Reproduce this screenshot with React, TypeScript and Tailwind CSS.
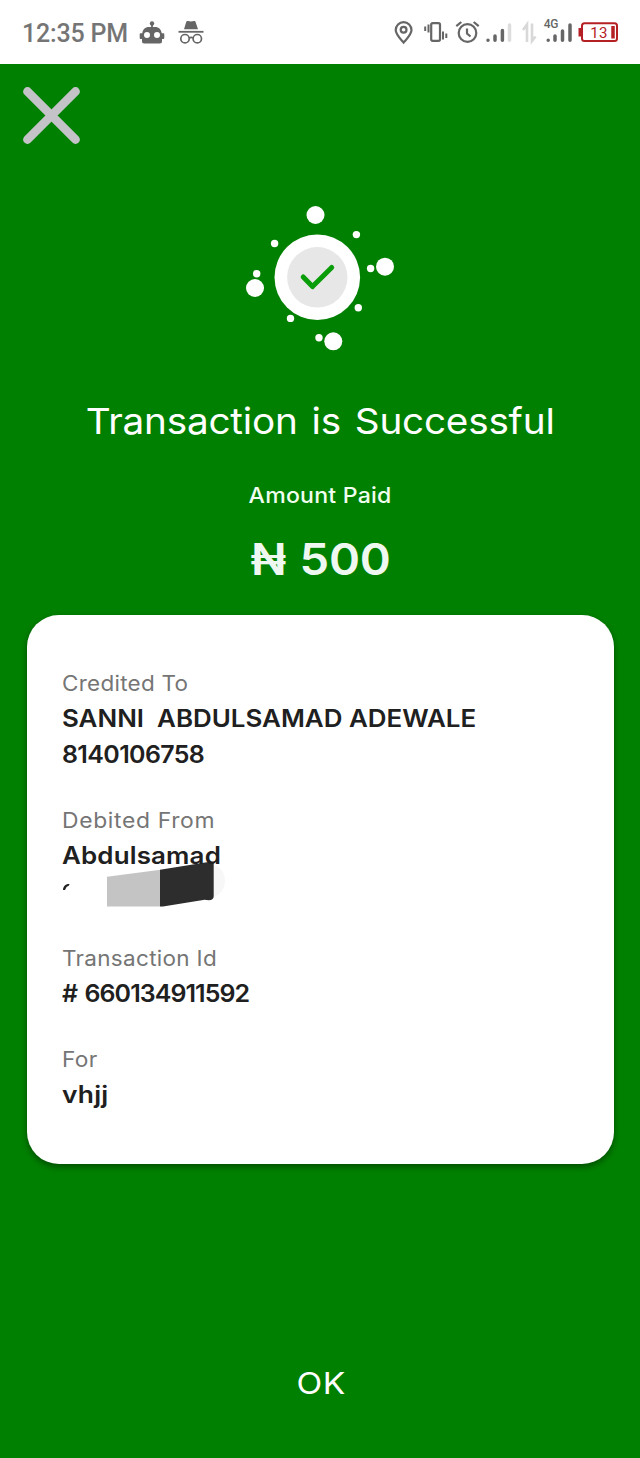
import type { ReactNode } from "react";

function RobotIcon() {
  return (
    <svg className="ml-[12px] h-[24px] w-[26px]" viewBox="139 20 26 24" fill="#666">
      <circle cx="152" cy="23.400" r="2.200" />
      <path d="M151.100 24h1.800v4h-1.800z" />
      <path fillRule="evenodd" d="M149 27h6c4 0 6.300 2.700 6.700 6.200h1.300c1 0 1.300.5 1.300 1.300v3.200c0 .8-.4 1.300-1.300 1.300h-1v2.200c0 1.300-.8 2.300-2.100 2.300h-15.800c-1.300 0-2.100-1-2.100-2.300V39h-1c-.9 0-1.300-.5-1.300-1.300v-3.200c0-.8.3-1.300 1.300-1.300h1.300C142.700 29.700 145 27 149 27zM147 32.100a3 3 0 1 0 0 6a3 3 0 1 0 0-6zM157 32.100a3 3 0 1 0 0 6a3 3 0 1 0 0-6z" />
    </svg>
  );
}

function IncognitoIcon() {
  return (
    <svg className="ml-[13px] h-[24px] w-[26px]" viewBox="178 20 26 24" fill="none" stroke="#666">
      <path d="M184 29.200 186.300 21.800c.3-.9 1-1 1.800-.7 1.800.6 4 .6 5.800 0 .8-.3 1.400 0 1.600.7l2.500 7.400z" fill="#666" stroke="none" />
      <path d="M178.500 31.800h25" strokeWidth="1.800" />
      <circle cx="185" cy="38.700" r="4.200" strokeWidth="1.700" />
      <circle cx="197.300" cy="38.700" r="4.200" strokeWidth="1.700" />
      <path d="M189.200 38c1.200-.8 2.700-.8 3.900 0" strokeWidth="1.700" />
    </svg>
  );
}

function SystemIcons() {
  return (
    <svg className="h-[32px] w-[226px]" viewBox="394 16 226 32" fill="none" stroke="#666">
      <g strokeWidth="2.200">
        <path d="M403.600 42.500c-3-3.500-7.900-8-7.900-12.500a7.900 7.900 0 0 1 15.800 0c0 4.500-4.900 9-7.900 12.500z" />
        <circle cx="403.600" cy="29.700" r="2.900" />
        <rect x="431.200" y="23.200" width="8.800" height="17.600" rx="1.500" />
        <path d="M428.500 24.500v8M425.200 26.500v4.500M443 31.500v8M446.300 33.500v4.500" strokeWidth="2" />
        <circle cx="467.500" cy="33" r="8.800" />
        <path d="M467 28.500v5l3.500 3M456.300 26.200l5-4.200M473.700 22l5 4.200" />
      </g>
      <g strokeWidth="3.500" strokeLinecap="round">
        <path d="M488 40.300v0M495 36v4.300M502.400 30.500v9.800" />
        <path d="M509.500 25v15.300" stroke="#ddd" />
        <path d="M548.200 40.300v0M555 36v4.300M562.500 31v9.300M570 25v15.300" />
      </g>
      <path d="M527 42V24.500L523 30M532 23.500V41l3.500-4.500" stroke="#d8d8d8" strokeWidth="2.600" />
      <text x="543.800" y="28" fontFamily="Roboto" fontSize="12" fontWeight="500" letterSpacing="-.3" fill="#666" stroke="none">4G</text>
      <rect x="582" y="23.200" width="35" height="17.800" rx="2.500" stroke="#b52025" strokeWidth="2" />
      <path d="M580 28v8.500" stroke="#b52025" strokeWidth="3" />
      <path d="M613 26v12.500" stroke="#b52025" strokeWidth="3.500" />
      <text x="590.300" y="37.500" fontFamily="Roboto" fontSize="15" letterSpacing=".2" fill="#b52025" stroke="none">13</text>
    </svg>
  );
}

function SuccessBadge() {
  const dots = [
    [315.500, 215, 9], [385, 266.700, 9], [255, 288, 9], [333.300, 341.300, 9],
    [274.600, 243.500, 3.700], [356.400, 234.600, 3.700], [370.600, 268.500, 3.700], [256.700, 273.700, 3.700],
    [358.300, 307.700, 3.700], [290.500, 318.400, 3.700], [319, 337.800, 3.700],
  ];
  return (
    <svg className="h-[150px] w-[160px]" viewBox="240 203 160 150" fill="white">
      {dots.map(([x, y, r]) => (
        <circle key={`${x}-${y}`} cx={x} cy={y} r={r} />
      ))}
      <circle cx="317.300" cy="277.300" r="42.800" />
      <circle cx="317.300" cy="277.300" r="30.200" fill="#e7e7e7" />
      <path d="M303.200 277l9.300 9.600 19.200-19.100" fill="none" stroke="#0a9d0a" strokeWidth="5" strokeLinecap="round" strokeLinejoin="round" />
    </svg>
  );
}

function Redaction() {
  return (
    <svg className="ml-px block h-[36px] w-[170px] overflow-visible" viewBox="63 874.500 170 36">
      <path d="M213.500 866c6 0 11.500 7 11.500 15s-5 15-11.500 16z" fill="#f7f7f7" />
      <path d="M63 890.500c0-3.500 2.500-6.300 6.500-6l-.5 1.500-2.500 1.500-1.500 3z" fill="#222" />
      <path d="M107 877.300l53.500-7V907H107z" fill="#c4c4c4" />
      <path d="M160 870.300l50-8 3.700 1.500V897c0 2-2 3.800-5 3.800l-4-.6L163 907h-3z" fill="#2d2d2d" />
    </svg>
  );
}

function Label({ children, className }: { children: ReactNode; className: string }) {
  return <div className={`h-[34px] w-fit origin-left text-[21px] leading-[34px] text-[#757575] ${className}`}>{children}</div>;
}

function Value({ children, className }: { children: ReactNode; className: string }) {
  return <div className={`h-[36px] w-fit origin-left text-[24px] leading-[36px] font-semibold whitespace-pre text-[#202020] ${className}`}>{children}</div>;
}

export default function App() {
  return (
    <div className="flex h-[1458px] w-[640px] flex-col overflow-hidden bg-[#008000] font-['Inter',sans-serif] text-white">
      <header className="flex h-[64px] shrink-0 items-center bg-white pr-[20px] pl-[22px]">
        <span className="w-[105px] pt-[3px] font-['Roboto',sans-serif] text-[25px] font-medium tracking-[-.2px] whitespace-nowrap text-[#757575]">12:35 PM</span>
        <RobotIcon />
        <IncognitoIcon />
        <span className="ml-auto"><SystemIcons /></span>
      </header>

      <main className="flex flex-col items-center">
        <button className="mt-[21px] ml-[21px] h-[61px] w-[61px] self-start" aria-label="Close">
          <svg viewBox="0 0 61 61" className="h-[61px] w-[61px]">
            <path d="M6.500 6.500l48 48M54.500 6.500l-48 48" stroke="#c4c4c8" strokeWidth="8.800" strokeLinecap="round" />
          </svg>
        </button>
        <div className="mt-[57px] h-[150px]"><SuccessBadge /></div>
        <h1 className="mt-[43px] h-[50px] scale-x-[1.075] text-[36px] leading-[50px] tracking-[-.2px] whitespace-nowrap [word-spacing:3px]">Transaction is Successful</h1>
        <p className="mt-[34.500px] h-[30px] scale-x-[1.1] pl-px text-[21px] leading-[30px] font-medium tracking-[.2px] text-[#f0fff0]">Amount Paid</p>
        <p className="mt-[23.500px] h-[50px] scale-x-[1.07] text-[44px] leading-[50px] font-semibold tracking-[-.3px] text-[#eef8f0] [word-spacing:2px]">₦ 500</p>

        <section className="mt-[30.500px] flex h-[549px] w-[587px] flex-col gap-[31.600px] rounded-[32px] bg-white pt-[52px] pl-[35px] shadow-[0_3px_6px_rgba(0,0,0,0.4)]">
          <div>
            <Label className="scale-x-[1.07] tracking-[.25px]">Credited To</Label>
            <Value className="scale-x-[1.08]">SANNI  ABDULSAMAD ADEWALE</Value>
            <Value className="scale-x-[1.04] tracking-[-.6px]">8140106758</Value>
          </div>
          <div>
            <Label className="scale-x-[1.09] tracking-[.6px]">Debited From</Label>
            <Value className="scale-x-[1.08] tracking-[.15px]">Abdulsamad</Value>
            <Redaction />
          </div>
          <div>
            <Label className="scale-x-[1.07] tracking-[.3px]">Transaction Id</Label>
            <Value className="scale-x-[1.04] tracking-[-.9px] [word-spacing:2px]"># 660134911592</Value>
          </div>
          <div>
            <Label className="scale-x-[1.08] tracking-[.3px]">For</Label>
            <Value className="scale-x-[1.1] tracking-[.2px]">vhjj</Value>
          </div>
        </section>

        <button className="mt-[199px] h-[40px] scale-x-[1.12] pl-[2px] text-[30px] leading-[40px] tracking-[.5px]">OK</button>
      </main>
    </div>
  );
}
